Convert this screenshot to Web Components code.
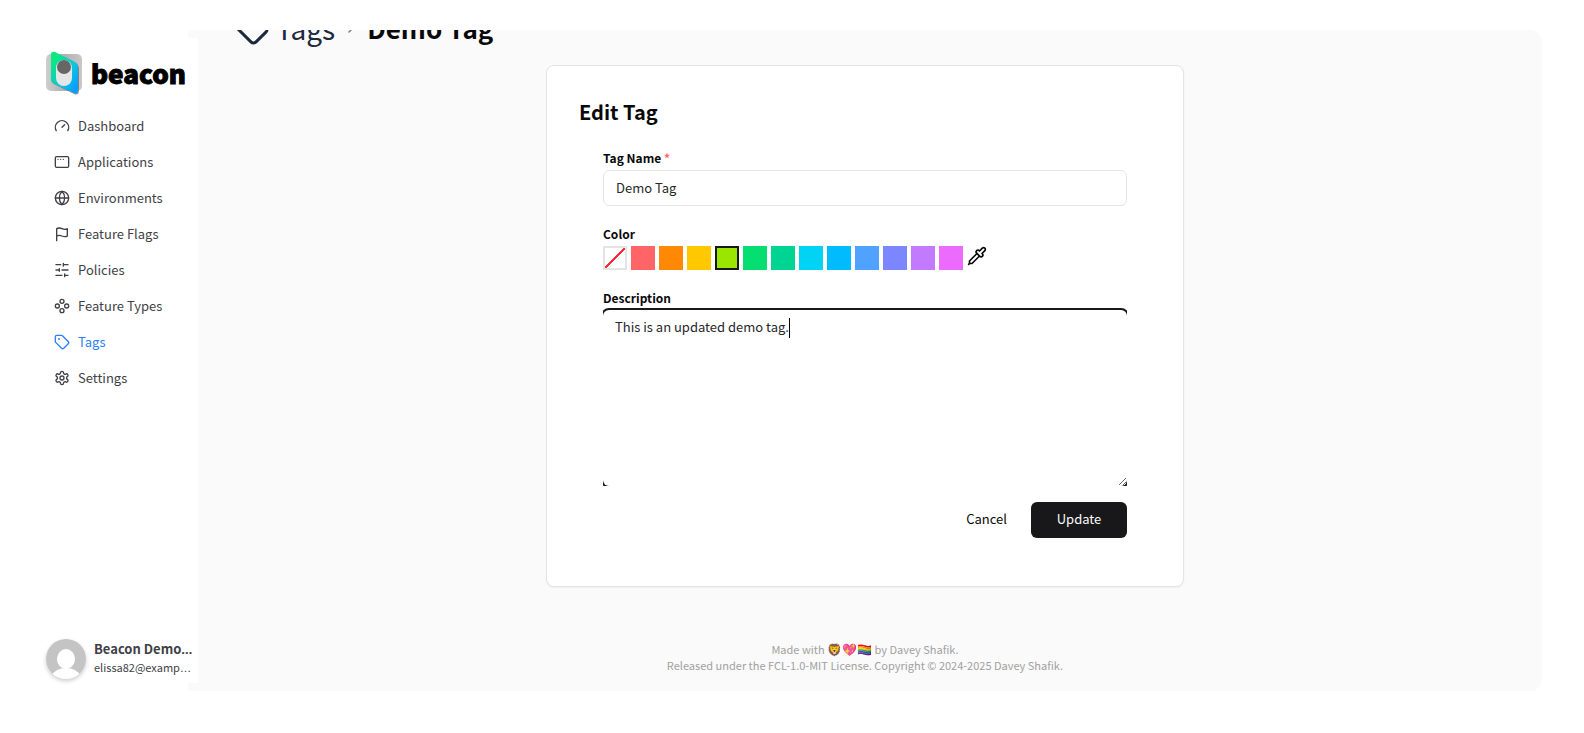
<!DOCTYPE html>
<html lang="en">
<head>
<meta charset="utf-8">
<title>Edit Tag – Beacon</title>
<style>
html, body { margin: 0; height: 100%; background: #fff; }
body { font: 13px/20px "Noto Sans CJK SC", "Noto Sans", sans-serif; color: #09090b; }
</style>
</head>
<body>
<beacon-app>
  <beacon-sidebar slot="sidebar">
    <nav-item icon="gauge">Dashboard</nav-item>
    <nav-item icon="window">Applications</nav-item>
    <nav-item icon="globe">Environments</nav-item>
    <nav-item icon="flag">Feature Flags</nav-item>
    <nav-item icon="sliders">Policies</nav-item>
    <nav-item icon="component">Feature Types</nav-item>
    <nav-item icon="tag" active>Tags</nav-item>
    <nav-item icon="settings">Settings</nav-item>
    <user-card slot="user"><span slot="name">Beacon Demo User</span><span slot="mail">elissa82@example.com</span></user-card>
  </beacon-sidebar>
  <page-heading slot="heading"></page-heading>
  <tag-form></tag-form>
  <page-footer slot="footer"></page-footer>
</beacon-app>
<script>
const ICONS = {
  gauge: '<path d="m12 14 4-4M3.340 19a10 10 0 1 1 17.320 0"/>',
  window: '<rect x="2" y="4" width="20" height="16" rx="2"/><path d="M6 8h.01M10 8h.01M14 8h.01"/>',
  globe: '<circle cx="12" cy="12" r="10"/><path d="M12 2a14.500 14.500 0 0 0 0 20 14.500 14.500 0 0 0 0-20M2 12h20"/>',
  flag: '<path d="M4 22V4s1-1 4-1 5 2 8 2 4-1 4-1v11s-1 1-4 1-5-2-8-2-4 1-4 1"/>',
  sliders: '<path d="M21 4h-7M10 4H3M21 12h-9M8 12H3M21 20h-5M12 20H3M14 2v4M8 10v4M16 18v4"/>',
  component: '<circle cx="12" cy="5" r="3"/><circle cx="12" cy="19" r="3"/><circle cx="5" cy="12" r="3"/><circle cx="19" cy="12" r="3"/>',
  tag: '<path d="M12.586 2.586A2 2 0 0 0 11.172 2H4a2 2 0 0 0-2 2v7.172a2 2 0 0 0 .586 1.414l8.704 8.704a2.426 2.426 0 0 0 3.420 0l6.580-6.580a2.426 2.426 0 0 0 0-3.420z"/><circle cx="7.500" cy="7.500" r=".5" fill="currentColor"/>',
  settings: '<path d="M12.220 2h-.44a2 2 0 0 0-2 2v.18a2 2 0 0 1-1 1.730l-.43.250a2 2 0 0 1-2 0l-.15-.08a2 2 0 0 0-2.730.730l-.22.380a2 2 0 0 0 .730 2.730l.150.100a2 2 0 0 1 1 1.720v.510a2 2 0 0 1-1 1.740l-.15.090a2 2 0 0 0-.73 2.730l.220.380a2 2 0 0 0 2.730.730l.150-.08a2 2 0 0 1 2 0l.430.250a2 2 0 0 1 1 1.730V20a2 2 0 0 0 2 2h.44a2 2 0 0 0 2-2v-.18a2 2 0 0 1 1-1.730l.430-.25a2 2 0 0 1 2 0l.150.080a2 2 0 0 0 2.730-.73l.220-.39a2 2 0 0 0-.73-2.730l-.15-.08a2 2 0 0 1-1-1.740v-.5a2 2 0 0 1 1-1.740l.150-.09a2 2 0 0 0 .730-2.730l-.22-.38a2 2 0 0 0-2.730-.73l-.15.080a2 2 0 0 1-2 0l-.43-.25a2 2 0 0 1-1-1.730V4a2 2 0 0 0-2-2z"/><circle cx="12" cy="12" r="3"/>',
  chevron: '<path d="m9 18 6-6-6-6"/>',
  pipette: '<path d="m2 22 1-1h3l9-9M3 21v-3l9-9M15 6l3.400-3.400a2.100 2.100 0 1 1 3 3L18 9l.4.4a2.100 2.100 0 1 1-3 3l-3.800-3.800a2.100 2.100 0 1 1 3-3z"/>'
};
const icon = (name, size, stroke = 2) => `<svg width="${size}" height="${size}" viewBox="0 0 24 24" fill="none" stroke="currentColor" stroke-width="${stroke}" stroke-linecap="round" stroke-linejoin="round" aria-hidden="true">${ICONS[name]}</svg>`;

function define(name, render) {
  customElements.define(name, class extends HTMLElement {
    constructor() {
      super();
      this.attachShadow({ mode: 'open' });
    }
    connectedCallback() {
      const template = document.createElement('template');
      template.innerHTML = render(this);
      this.shadowRoot.replaceChildren(template.content.cloneNode(true));
    }
  });
}

define('beacon-app', () => `
<style>
:host { display: grid; grid-template-columns: 152px minmax(0, 1fr); box-sizing: border-box; height: 100vh; padding: 30px 42px 42px 46px; }
.side { z-index: 1; display: flex; margin: 8px 0; background: #fff; }
main { display: flex; flex-direction: column; overflow: hidden; margin-left: -10px; padding: 0 24px; background: #fafafa; border-radius: 0 12px 12px 0; }
.head { display: flex; flex-direction: column; justify-content: flex-end; height: 35px; }
.body { display: flex; justify-content: center; }
.foot { margin-top: auto; padding-bottom: 18px; }
</style>
<div class="side"><slot name="sidebar"></slot></div>
<main>
  <div class="head"><slot name="heading"></slot></div>
  <div class="body"><slot></slot></div>
  <div class="foot"><slot name="footer"></slot></div>
</main>`);

define('beacon-sidebar', () => `
<style>
:host { display: flex; flex-direction: column; width: 100%; min-width: 0; }
.brand { display: flex; align-items: center; gap: 7px; height: 44px; margin-top: 13px; color: #000; text-decoration: none; font-size: 26px; line-height: 40px; font-weight: 900; -webkit-text-stroke: 1px #000; }
.brand svg { flex: none; }
nav { display: flex; flex-direction: column; margin-top: 13px; }
.user { margin-top: auto; margin-bottom: 4px; }
</style>
<a class="brand" href="#">
  <svg width="38" height="44" viewBox="0 0 38 44" aria-hidden="true">
    <defs>
      <linearGradient id="g" x1="0" y1="0" x2="1" y2="1"><stop offset="0.150" stop-color="#0ae882"/><stop offset="0.600" stop-color="#08c4e0"/><stop offset="0.900" stop-color="#0a9cff"/></linearGradient>
      <linearGradient id="s" x1="0" y1="0" x2="1" y2="0"><stop offset="0" stop-color="#cfcfcf"/><stop offset="0.500" stop-color="#b0b0b0"/><stop offset="1" stop-color="#c8c8c8"/></linearGradient>
    </defs>
    <rect x="0" y="3" width="36" height="37" rx="5" fill="url(#s)"/>
    <path d="M5 5Q5 0 10 2L30 12Q33 14 33 17V39Q33 45 28 43L8 33Q5 31 5 28Z" fill="#555" opacity=".6"/>
    <path d="M5 4Q5 0 9 1L29 11Q32 13 32 16V39Q32 44 28 42L8 33Q5 31 5 28Z" fill="url(#g)"/>
    <rect x="10" y="9" width="16" height="26" rx="8" fill="#e6e6e6"/>
    <circle cx="18" cy="16" r="7" fill="#666"/>
  </svg>
  <span>beacon</span>
</a>
<nav aria-label="Main"><slot></slot></nav>
<div class="user"><slot name="user"></slot></div>`);

define('nav-item', el => `
<style>
:host { display: block; }
a { display: flex; align-items: center; gap: 8px; height: 36px; padding: 0 8px; color: #3f3f46; text-decoration: none; }
:host([active]) a { color: #2b7fff; }
</style>
<a href="#" ${el.hasAttribute('active') ? 'aria-current="page"' : ''}>${icon(el.getAttribute('icon'), 16)}<span><slot></slot></span></a>`);

define('user-card', () => `
<style>
:host { display: flex; align-items: center; gap: 8px; height: 40px; color: #3f3f46; }
.avatar { flex: none; width: 40px; height: 40px; border-radius: 20px; overflow: hidden; box-shadow: 0 2px 4px #0003; }
.avatar svg { display: block; }
.info { min-width: 0; flex: 1; margin-right: 4px; padding-bottom: 2px; }
p { margin: 0; overflow: hidden; white-space: nowrap; text-overflow: ellipsis; font-family: "Noto Sans", sans-serif; }
p span { font-family: "Noto Sans CJK SC", sans-serif; }
.name { font-weight: 700; line-height: 20px; }
.mail { font-size: 11px; line-height: 16px; font-family: "DejaVu Sans", sans-serif; }
</style>
<div class="avatar"><svg width="40" height="40" viewBox="0 0 40 40" role="img" aria-label="Avatar"><rect width="40" height="40" fill="#c4c4c4"/><ellipse cx="20" cy="20" rx="9" ry="10" fill="#fff"/><path d="M5 37Q10 29 20 29T35 37V40H5Z" fill="#fff"/></svg></div>
<div class="info"><p class="name"><span><slot name="name"></slot></span></p><p class="mail"><span><slot name="mail"></slot></span></p></div>`);

define('page-heading', () => `
<style>
:host { display: block; }
nav { display: flex; align-items: center; gap: 8px; height: 44px; margin-bottom: 15px; padding-left: 22px; font-size: 28px; line-height: 44px; }
a { display: flex; align-items: center; gap: 6px; color: #1d293d; text-decoration: none; }
.sep { display: flex; color: #71717a; }
b { font-weight: 700; font-size: 26px; }
</style>
<nav aria-label="Breadcrumb"><a href="#">${icon('tag', 36)}<span>Tags</span></a><span class="sep">${icon('chevron', 16)}</span><b>Demo Tag</b></nav>`);

define('color-picker', () => {
  const colors = [['Red', '#ff6467'], ['Orange', '#ff8904'], ['Amber', '#ffc800'], ['Lime', '#9ae600'], ['Green', '#05df72'], ['Emerald', '#00d492'], ['Cyan', '#00d3f3'], ['Sky', '#00bcff'], ['Blue', '#51a2ff'], ['Indigo', '#7c86ff'], ['Purple', '#c27aff'], ['Fuchsia', '#ed6aff']];
  return `
<style>
:host { display: block; }
fieldset { display: flex; gap: 4px; margin: 0; padding: 0; border: 0; }
input { appearance: none; box-sizing: border-box; width: 24px; height: 24px; margin: 0; background: var(--c); }
input:checked { border: 2px solid #18181b; }
.none { border: 2px solid #e4e4e4; background: linear-gradient(to bottom right, #fff 47%, #fb2c36 47%, #fb2c36 53%, #fff 53%); }
button { display: flex; width: 20px; height: 20px; margin: 0; padding: 0; border: 0; background: none; color: #09090b; }
</style>
<fieldset aria-label="Color"><input class="none" type="radio" name="color" aria-label="No color">${colors.map(([n, c]) => `<input type="radio" name="color" aria-label="${n}" style="--c:${c}"${n === 'Lime' ? ' checked' : ''}>`).join('')}<button type="button" aria-label="Pick a color">${icon('pipette', 20)}</button></fieldset>`;
});

define('tag-form', () => `
<style>
:host { display: block; box-sizing: border-box; width: 638px; max-width: 100%; padding: 28px 56px 48px; border: 1px solid #e4e4e4; border-radius: 8px; background: #fff; box-shadow: 0 1px 2px #0000000d; }
h2 { margin: 0 -24px 18px; font-size: 20px; line-height: 36px; font-weight: 700; }
form { display: flex; flex-direction: column; }
label, .label { display: block; height: 20px; margin-bottom: 2px; font-size: 12px; font-weight: 700; line-height: 20px; }
label[for=desc] { margin-bottom: 0; }
.req { color: #ff6467; }
input { display: block; box-sizing: border-box; width: 100%; height: 36px; margin-bottom: 18px; padding: 0 12px 2px; border: 1px solid #e4e4e4; border-radius: 6px; background: #fff; font: inherit; color: #27272a; outline: 0; }
color-picker { margin-bottom: 18px; }
.area { position: relative; overflow: hidden; margin-bottom: 16px; padding-top: 2px; }
textarea { display: block; box-sizing: border-box; width: 100%; height: 176px; padding: 7px 12px; border: 0; border-radius: 6px; background: #fff; box-shadow: 0 0 0 2px #18181b; font: inherit; color: #27272a; outline: 0; resize: vertical; }
.caret { position: absolute; left: 186px; top: 10px; width: 1px; height: 20px; background: #09090b; }
.actions { display: flex; justify-content: flex-end; }
button { height: 36px; padding: 0 24px 2px; border: 0; border-radius: 6px; background: none; font: inherit; color: #09090b; }
.primary { width: 96px; background: #18181b; color: #fafafa; }
</style>
<h2>Edit Tag</h2>
<form>
  <label for="name">Tag Name <span class="req">*</span></label>
  <input id="name" value="Demo Tag" required>
  <div class="label">Color</div>
  <color-picker></color-picker>
  <label for="desc">Description</label>
  <div class="area"><textarea id="desc">This is an updated demo tag.</textarea><span class="caret"></span></div>
  <div class="actions"><button type="button">Cancel</button><button class="primary" type="button">Update</button></div>
</form>`);

define('page-footer', () => `
<style>
:host { display: block; text-align: center; font-size: 11px; line-height: 16px; color: #a1a1a1; }
p { margin: 0; height: 16px; }
.emoji { font-size: 12px; line-height: 16px; }
</style>
<p>Made with <span class="emoji">🦁💖🏳️‍🌈</span> by Davey Shafik.</p>
<p>Released under the FCL-1.0-MIT License. Copyright © 2024-2025 Davey Shafik.</p>`);
</script>
</body>
</html>
